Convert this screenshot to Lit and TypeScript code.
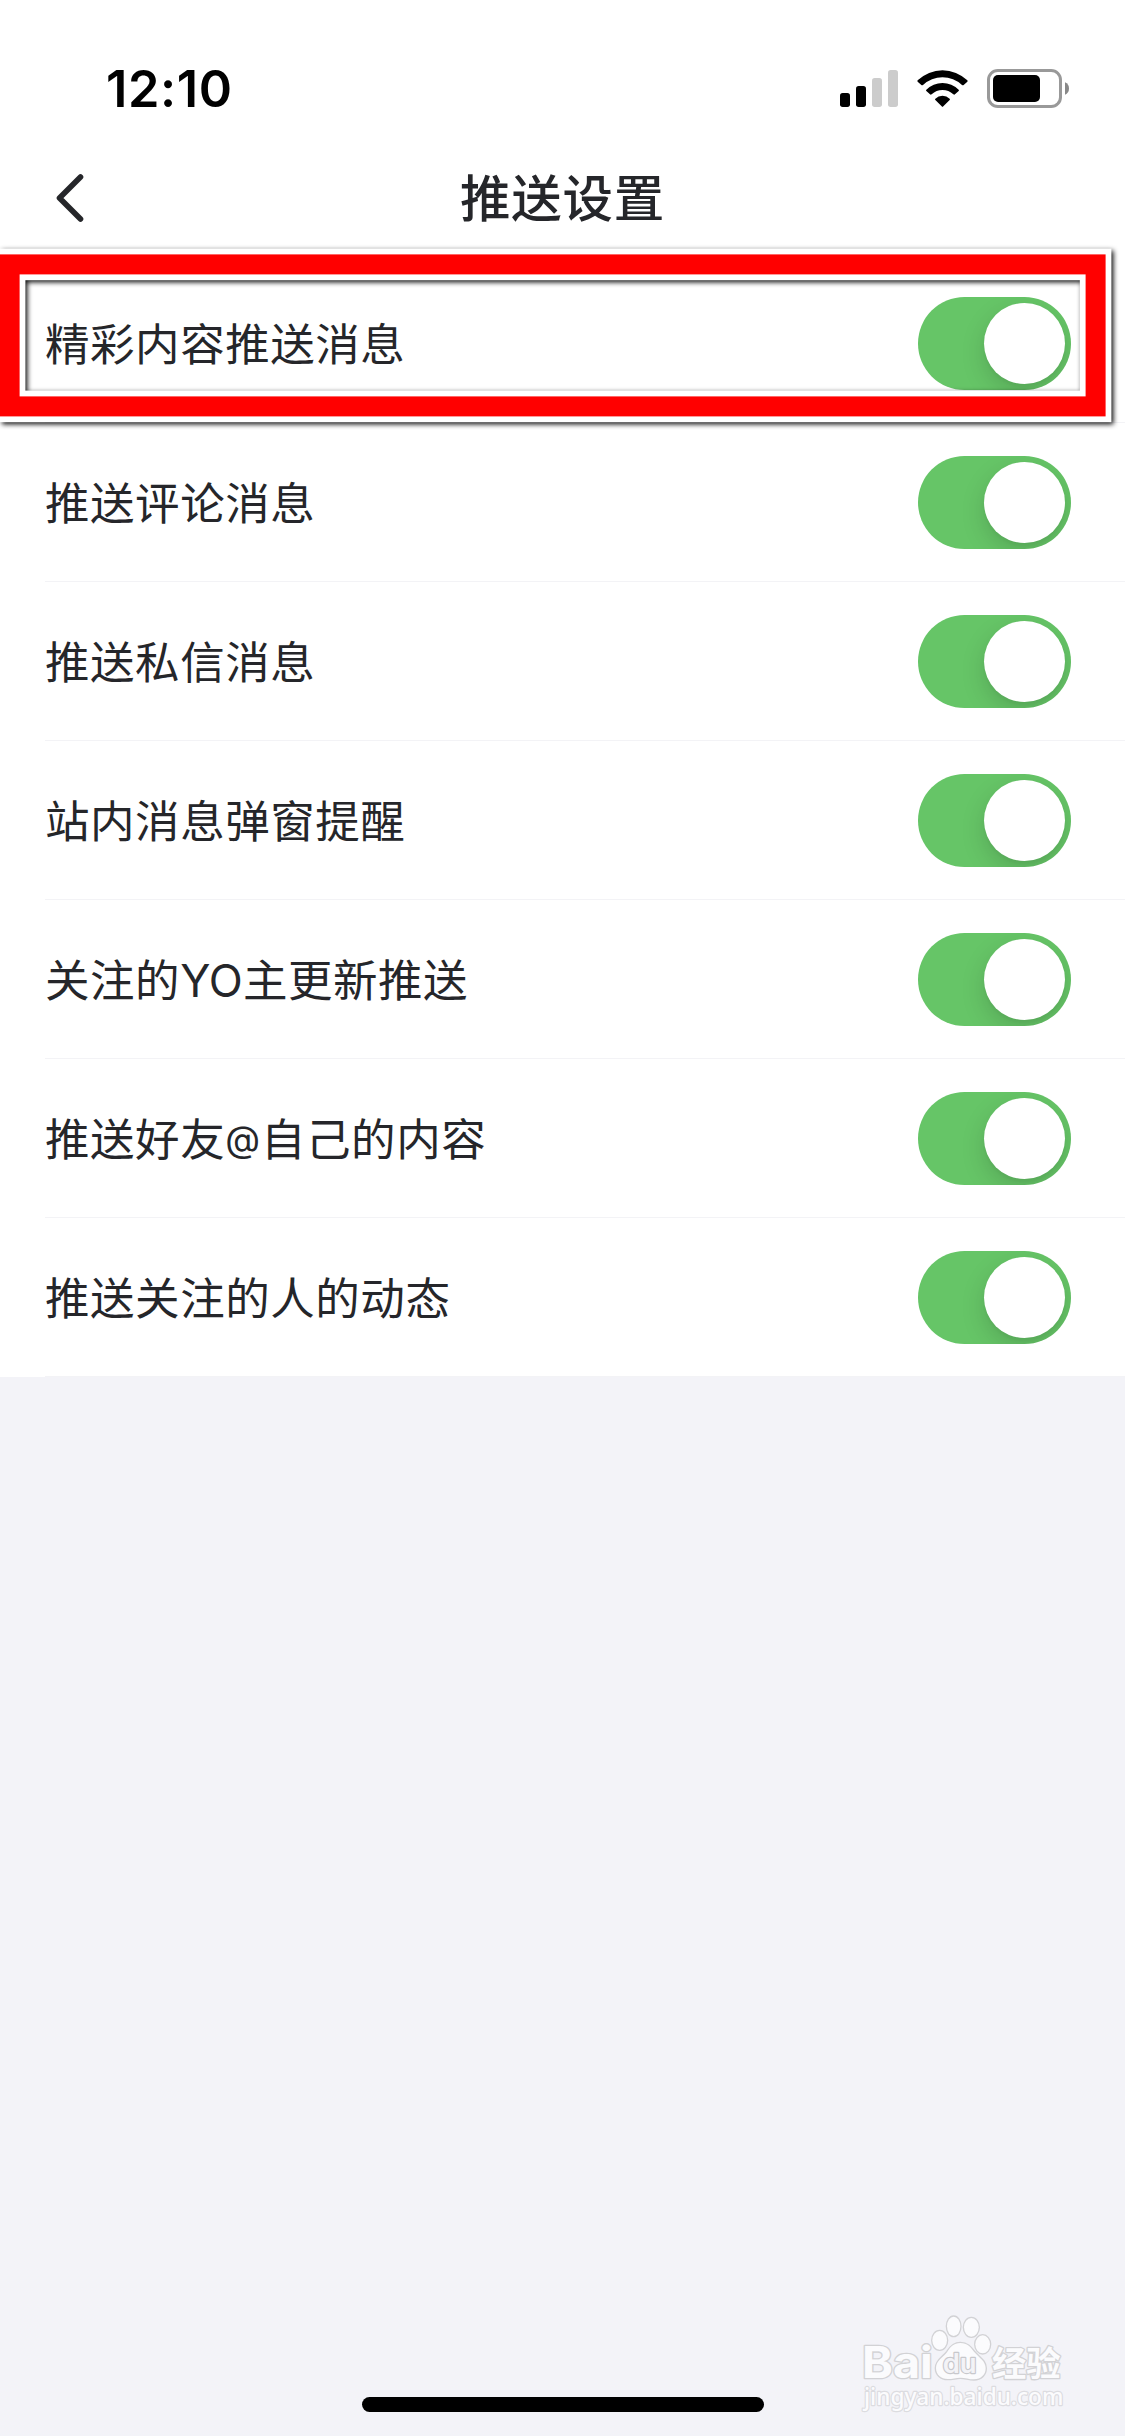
import { LitElement, html, css } from "lit";
import { customElement, property, state } from "lit/decorators.js";

@customElement("status-bar")
class StatusBar extends LitElement {
  static styles = css`
    :host { display: flex; height: 132px; justify-content: space-between; align-items: flex-start; box-sizing: border-box; padding: 40px 0 0 106px; }
    .time { font: 600 50.5px/98px Inter, "Liberation Sans", sans-serif; color: #000; letter-spacing: 0.6px; }
    .icons { width: 325px; height: 100px; display: block; }
  `;
  render() {
    return html`
      <span class="time">12:10</span>
      <svg class="icons" viewBox="0 0 975 300">
        <rect x="120" y="159" width="30" height="42" rx="8" />
        <rect x="168" y="138" width="30" height="63" rx="8" />
        <rect x="216" y="114" width="30" height="87" rx="8" fill="#ccc" />
        <rect x="264" y="90" width="30" height="111" rx="8" fill="#ccc" />
        <path d="M353 121A107 107 0 0 1 502 121Q504 123 502 125L491 135Q489 137 486 135A86 86 0 0 0 369 135Q366 137 364 135L353 125Q351 123 353 121Z" />
        <path d="M379 149A68 68 0 0 1 476 149Q478 151 476 153L465 163Q463 165 460 163A48 48 0 0 0 395 163Q392 165 390 163L379 153Q377 151 379 149Z" />
        <path d="M406 176A31 31 0 0 1 449 176Q451 178 449 180L430 199Q427.500 202 425 199L406 180Q404 178 406 176Z" />
        <rect x="565.500" y="91.500" width="216" height="108" rx="28" fill="none" stroke="#999" stroke-width="9" />
        <rect x="579" y="105" width="141" height="81" rx="15" />
        <path d="M795 127Q807 132 807 145.500T795 164Z" fill="#888" />
      </svg>
    `;
  }
}

@customElement("nav-bar")
class NavBar extends LitElement {
  @property() heading = "";
  static styles = css`
    :host { display: grid; grid-template-columns: 140px 1fr 140px; align-items: center; height: 132px; }
    .back { width: 30px; height: 52px; margin-left: 55px; display: block; }
    .title { margin: 0; padding-bottom: 6px; text-align: center; font: 500 50.5px/74px "Noto Sans CJK SC", sans-serif; letter-spacing: 0.7px; color: #25262a; }
  `;
  render() {
    return html`
      <svg class="back" viewBox="0 0 30 52"><path d="M25.500 5L4.500 26L25.500 47" fill="none" stroke="#25262a" stroke-width="5.600" stroke-linecap="round" stroke-linejoin="round" /></svg>
      <h1 class="title">${this.heading}</h1>
    `;
  }
}

@customElement("toggle-switch")
class ToggleSwitch extends LitElement {
  @property({ type: Boolean, reflect: true }) on = false;
  static styles = css`
    :host { display: flex; justify-content: flex-start; box-sizing: border-box; width: 153px; height: 93px; padding: 6px; border-radius: 46.5px; background: #e9e9eb; overflow: hidden; }
    :host([on]) { justify-content: flex-end; background: #66c567; }
    .knob { width: 81px; height: 81px; border-radius: 50%; background: #fff; box-shadow: 0 9px 24px rgba(0, 0, 0, 0.15), 0 3px 3px rgba(0, 0, 0, 0.03); }
  `;
  render() {
    return html`<span class="knob"></span>`;
  }
}

@customElement("setting-row")
class SettingRow extends LitElement {
  @property() label = "";
  @property({ type: Boolean }) on = false;
  static styles = css`
    :host { display: block; padding-left: 45px; background: #fff; }
    .row { display: flex; align-items: center; justify-content: space-between; box-sizing: border-box; height: 159px; padding: 1px 54px 0 0; border-bottom: 1px solid #f3f3f6; }
    .label { padding-bottom: 4px; font: 400 44.5px/66px "Noto Sans CJK SC", sans-serif; letter-spacing: 0.55px; color: #25262a; white-space: nowrap; }
    .latin { font: 400 44.5px/1 Inter, "Liberation Sans", sans-serif; letter-spacing: 0; }
    .at { font: 400 36px/1 Inter, "Liberation Sans", sans-serif; letter-spacing: 1px; vertical-align: 4px; }
  `;
  private runs() {
    return this.label.split(/([A-Z]+|@)/).map((part) =>
      part === "@" ? html`<span class="at">@</span>` : /^[A-Z]+$/.test(part) ? html`<span class="latin">${part}</span>` : part
    );
  }
  render() {
    return html`<div class="row"><span class="label">${this.runs()}</span><toggle-switch ?on=${this.on}></toggle-switch></div>`;
  }
}

@customElement("site-watermark")
class SiteWatermark extends LitElement {
  static styles = css`
    :host { display: block; width: 285px; height: 146px; }
    .mark { display: block; width: 100%; height: 100%; }
    .shape { fill: #fbfbfd; stroke: #d2d2d5; stroke-width: 8; paint-order: stroke; stroke-linejoin: round; }
    .latin { font-family: Inter, sans-serif; font-weight: 700; }
    .cjk { font-family: "Noto Sans CJK SC", sans-serif; font-weight: 700; }
    .url { font-family: "Noto Sans", sans-serif; font-weight: 500; stroke-width: 7; stroke: #dcdce0; }
    .du { fill: #f3f3f7; stroke: #c8c8cc; stroke-width: 7; font-weight: 600; }
  `;
  render() {
    return html`
      <svg class="mark" viewBox="0 0 855 438">
        <text class="shape latin" x="66" y="264" font-size="132" textLength="212" lengthAdjust="spacingAndGlyphs">Bai</text>
        <ellipse class="shape" cx="299" cy="151" rx="22" ry="28" />
        <ellipse class="shape" cx="341" cy="109" rx="20" ry="29" />
        <ellipse class="shape" cx="394" cy="112" rx="22" ry="28" />
        <ellipse class="shape" cx="428" cy="163" rx="22" ry="27" />
        <path class="shape" d="M361 159C342 159 331 171 322 185C311 201 288 211 288 234C288 254 303 267 323 267C338 267 347 263 361 263C376 263 386 268 402 268C423 268 437 254 437 235C437 212 417 203 402 185C391 171 382 159 361 159Z" />
        <text class="shape latin du" x="308" y="249" font-size="80" textLength="102" lengthAdjust="spacingAndGlyphs">du</text>
        <text class="shape cjk" x="456" y="257" font-size="104" textLength="206" lengthAdjust="spacingAndGlyphs">经验</text>
        <text class="shape url" x="72" y="345" font-size="68" textLength="598" lengthAdjust="spacingAndGlyphs">jingyan.baidu.com</text>
      </svg>
    `;
  }
}

@customElement("app-root")
class AppRoot extends LitElement {
  @state() private settings = [
    "精彩内容推送消息",
    "推送评论消息",
    "推送私信消息",
    "站内消息弹窗提醒",
    "关注的YO主更新推送",
    "推送好友@自己的内容",
    "推送关注的人的动态",
  ];
  static styles = css`
    :host { display: flex; flex-direction: column; position: relative; width: 1125px; height: 2436px; overflow: hidden; background: #f3f3f8; }
    .top { background: #fff; }
    .rest { flex: 1; display: flex; flex-direction: column; justify-content: flex-end; align-items: center; padding-bottom: 24px; }
    .home { width: 402px; height: 15px; border-radius: 7.5px; background: #000; }
    .frame { position: absolute; left: 0; top: 234px; width: 1125px; height: 200px; pointer-events: none; filter: drop-shadow(2px 2px 2.5px rgba(0, 0, 0, 0.95)); }
    .watermark { position: absolute; left: 840px; top: 2290px; }
  `;
  render() {
    return html`
      <header class="top">
        <status-bar></status-bar>
        <nav-bar heading="推送设置"></nav-bar>
      </header>
      <main>${this.settings.map((label) => html`<setting-row .label=${label} .on=${true}></setting-row>`)}</main>
      <div class="rest"><div class="home"></div></div>
      <svg class="frame" viewBox="0 234 1125 200">
        <rect x="9.600" y="264.400" width="1086" height="142" fill="none" stroke="#fff" stroke-width="31.600" />
        <rect x="9.600" y="264.400" width="1086" height="142" fill="none" stroke="#f00" stroke-width="20" />
      </svg>
      <site-watermark class="watermark"></site-watermark>
    `;
  }
}
